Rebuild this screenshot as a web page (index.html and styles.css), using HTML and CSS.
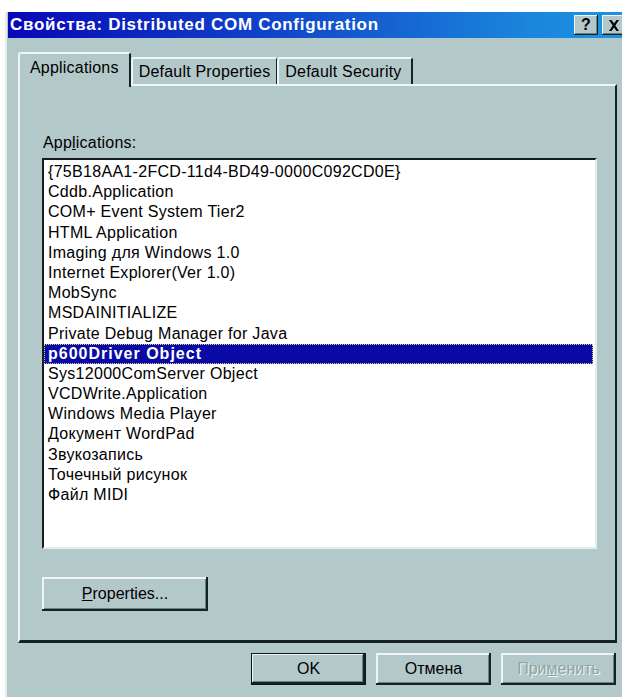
FILE: index.html
```html
<!DOCTYPE html>
<html lang="ru">
<head>
<meta charset="utf-8">
<title>Свойства: Distributed COM Configuration</title>
<link rel="stylesheet" href="styles.css">
</head>
<body>
<div class="window">
  <div class="titlebar">
    <span class="title">Свойства: Distributed COM Configuration</span>
    <div class="caption-buttons">
      <span class="cap-btn help">?</span>
      <span class="cap-btn close">
        <svg width="12" height="11" viewBox="0 0 12 11"><path d="M1 0h2.5L6 3.5 8.5 0H11L7.3 5.5 11 11H8.5L6 7.5 3.5 11H1l3.7-5.5z" fill="#000"/></svg>
      </span>
    </div>
  </div>

  <div class="tabs">
    <div class="tab active">Applications</div>
    <div class="tab">Default Properties</div>
    <div class="tab last">Default Security</div>
  </div>

  <div class="panel">
    <div class="label">App<u>l</u>ications:</div>
    <div class="listbox">
      <div class="item">{75B18AA1-2FCD-11d4-BD49-0000C092CD0E}</div>
      <div class="item">Cddb.Application</div>
      <div class="item">COM+ Event System Tier2</div>
      <div class="item">HTML Application</div>
      <div class="item">Imaging для Windows 1.0</div>
      <div class="item">Internet Explorer(Ver 1.0)</div>
      <div class="item">MobSync</div>
      <div class="item">MSDAINITIALIZE</div>
      <div class="item">Private Debug Manager for Java</div>
      <div class="item selected">p600Driver Object</div>
      <div class="item">Sys12000ComServer Object</div>
      <div class="item">VCDWrite.Application</div>
      <div class="item">Windows Media Player</div>
      <div class="item">Документ WordPad</div>
      <div class="item">Звукозапись</div>
      <div class="item">Точечный рисунок</div>
      <div class="item">Файл MIDI</div>
    </div>
    <button class="btn props"><u>P</u>roperties...</button>
  </div>

  <div class="footer">
    <button class="btn default">OK</button>
    <button class="btn">Отмена</button>
    <button class="btn disabled">При<u>м</u>енить</button>
  </div>
</div>
</body>
</html>
```

FILE: styles.css
```css
html, body {
  margin: 0;
  padding: 0;
  background: #ffffff;
}

body {
  width: 622px;
  height: 697px;
  overflow: hidden;
  font-family: "Liberation Sans", Arial, sans-serif;
  color: #000;
}

.window {
  margin: 12px 0 0 5px;
  height: 685px;
  background: #b3c9c9;
  border-left: 2px solid #e4eeee;
  box-sizing: border-box;
}

/* caption */
.titlebar {
  margin-left: 1px;
  height: 26px;
  background: linear-gradient(90deg, #0808b8 0%, #1040c8 40%, #1a86dc 85%, #1e92e2 100%);
  display: flex;
  align-items: center;
  justify-content: space-between;
}

.title {
  color: #fff;
  font-weight: bold;
  font-size: 17px;
  padding-left: 2px;
  letter-spacing: 0.7px;
}

.caption-buttons {
  display: flex;
  gap: 4px;
  margin-right: -4px;
}

.cap-btn {
  width: 24px;
  height: 20px;
  background: #b3c9c9;
  box-shadow: inset -1px -1px 0 #102020, inset 1px 1px 0 #f0f6f6, inset -2px -2px 0 #6c8282;
  display: flex;
  align-items: center;
  justify-content: center;
  font-weight: bold;
  font-size: 16px;
  box-sizing: border-box;
}

/* tab strip */
.tabs {
  display: flex;
  align-items: flex-end;
  margin: 14px 0 0 11px;
  height: 32px;
}

.tab {
  height: 27px;
  padding: 0 6px 0 6px;
  font-size: 16px;
  letter-spacing: 0.2px;
  display: flex;
  align-items: center;
  border-top: 2px solid #eef5f5;
  border-left: 2px solid #eef5f5;
  border-right: 2px solid #142424;
  border-radius: 3px 3px 0 0;
  box-sizing: border-box;
  margin-left: -1px;
}

.tab.last {
  padding-right: 9px;
}

.tab.active {
  height: 35px;
  margin-bottom: -3px;
  margin-left: 0;
  padding: 0 10px 6px 10px;
  position: relative;
  z-index: 1;
  background: #b3c9c9;
}

.tab.active + .tab {
  margin-left: 0;
}

/* page body */
.panel {
  margin-left: 11px;
  width: 599px;
  height: 559px;
  box-sizing: border-box;
  border-top: 2px solid #eef5f5;
  border-left: 2px solid #eef5f5;
  border-right: 2px solid #142424;
  border-bottom: 3px solid #142424;
  padding: 47px 0 0 22px;
}

.label {
  font-size: 16px;
  letter-spacing: 0.2px;
  line-height: 20px;
  margin-left: 1px;
}

.listbox {
  margin-top: 5px;
  width: 555px;
  height: 391px;
  box-sizing: border-box;
  background: #fff;
  border-top: 2px solid #142020;
  border-left: 2px solid #142020;
  border-right: 2px solid #e4eeee;
  border-bottom: 2px solid #e4eeee;
  padding: 2px 2px 0 0;
  overflow: hidden;
}

.item {
  font-size: 16px;
  letter-spacing: 0.3px;
  line-height: 20.2px;
  height: 20.2px;
  padding-left: 4px;
  white-space: nowrap;
}

.item.selected {
  background: #0a0aa6;
  color: #fff;
  font-weight: bold;
  letter-spacing: 1px;
  outline: 1px dotted #d6d680;
  outline-offset: -1px;
}

/* push buttons */
.btn {
  font-family: "Liberation Sans", Arial, sans-serif;
  font-size: 16px;
  color: #000;
  background: #b3c9c9;
  border: none;
  padding: 0;
  box-sizing: border-box;
  box-shadow: inset -2px -2px 0 #142424, inset 2px 2px 0 #eef5f5, inset -3px -3px 0 #6c8282;
}

.btn.props {
  display: block;
  margin-top: 28px;
  width: 166px;
  height: 34px;
}

.footer {
  display: flex;
  justify-content: flex-end;
  gap: 10px;
  margin-top: 10px;
  padding-right: 6px;
}

.footer .btn {
  width: 115px;
  height: 32px;
  font-size: 16px;
}

.btn.default {
  border: 1px solid #0c1616;
  box-shadow: inset -2px -2px 0 #142424, inset 1px 1px 0 #eef5f5, inset -3px -3px 0 #6c8282;
}

.btn.disabled {
  color: #8ea4a4;
  text-shadow: 1px 1px 0 #f2f8f8;
}
```
